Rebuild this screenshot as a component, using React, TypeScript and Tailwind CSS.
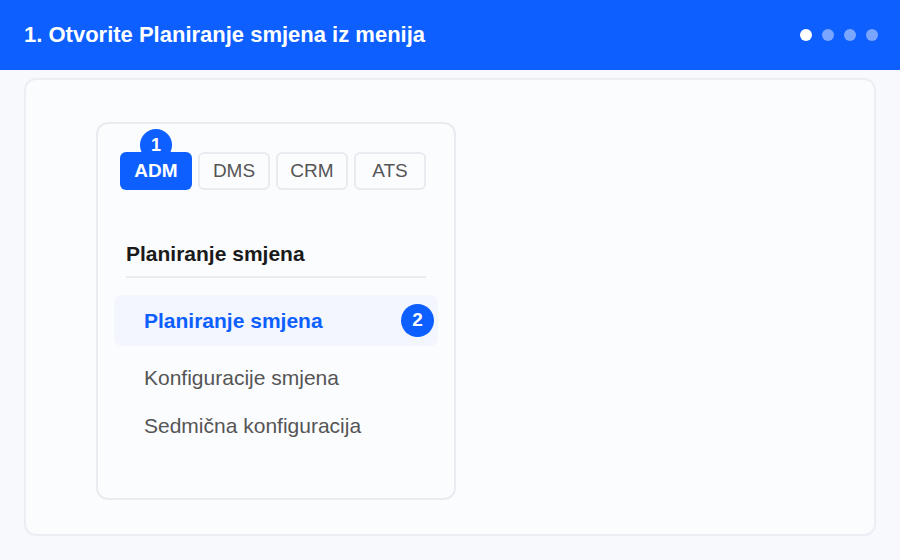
import React from "react";

export default function App() {
  const font = { fontFamily: '"Liberation Sans", Arial, sans-serif' };
  return (
    <div className="w-[900px] h-[560px] bg-[#f8f9fc] flex flex-col" style={font}>
      <div className="h-[70px] bg-[#0d5fff] flex items-center justify-between pl-6 pr-[22px] shrink-0">
        <div className="text-white font-bold text-[22px] leading-none">1. Otvorite Planiranje smjena iz menija</div>
        <div className="flex gap-[10px]">
          <span className="w-3 h-3 rounded-full bg-white" />
          <span className="w-3 h-3 rounded-full bg-[#7aa6ff]" />
          <span className="w-3 h-3 rounded-full bg-[#7aa6ff]" />
          <span className="w-3 h-3 rounded-full bg-[#7aa6ff]" />
        </div>
      </div>
      <div className="mx-6 mt-2 mb-6 flex-1 rounded-xl border-2 border-[#eceef4] bg-[#fbfcfe] pl-[70px] pt-[42px]">
        <div className="w-[360px] h-[378px] rounded-xl border-2 border-[#e9ebf1] bg-[#fbfcfe] pt-[28px] px-[22px]">
          <div className="flex gap-[6px]">
            <div className="relative w-[72px] h-[38px] rounded-md bg-[#0d5fff] text-white font-bold text-[19px] flex items-center justify-center">
              <span className="absolute left-[20px] -top-[23px] w-8 h-8 rounded-full bg-[#0d5fff] text-white font-bold text-[18px] flex items-center justify-center">1</span>
              <span className="relative">ADM</span>
            </div>
            {["DMS", "CRM", "ATS"].map((t) => (
              <div key={t} className="w-[72px] h-[38px] rounded-md border-2 border-[#e9ebf1] text-[#555] text-[19px] flex items-center justify-center">
                {t}
              </div>
            ))}
          </div>
          <div className="mt-[53px] mx-[6px] pb-[12px] border-b-2 border-[#e9ebf1] text-[21px] font-bold text-[#1a1a1a] leading-none">
            Planiranje smjena
          </div>
          <div className="mt-[17px] -mx-[6px] h-[51px] rounded-lg bg-[#f3f6fc] flex items-center justify-between pl-[30px] pr-[4px]">
            <span className="text-[21px] font-bold text-[#0d5fff]">Planiranje smjena</span>
            <span className="w-[33px] h-[33px] rounded-full bg-[#0d5fff] text-white font-bold text-[19px] flex items-center justify-center">2</span>
          </div>
          <div className="mt-[21px] pl-[24px] text-[21px] text-[#555] leading-none">Konfiguracije smjena</div>
          <div className="mt-[27px] pl-[24px] text-[21px] text-[#555] leading-none">Sedmična konfiguracija</div>
        </div>
      </div>
    </div>
  );
}
